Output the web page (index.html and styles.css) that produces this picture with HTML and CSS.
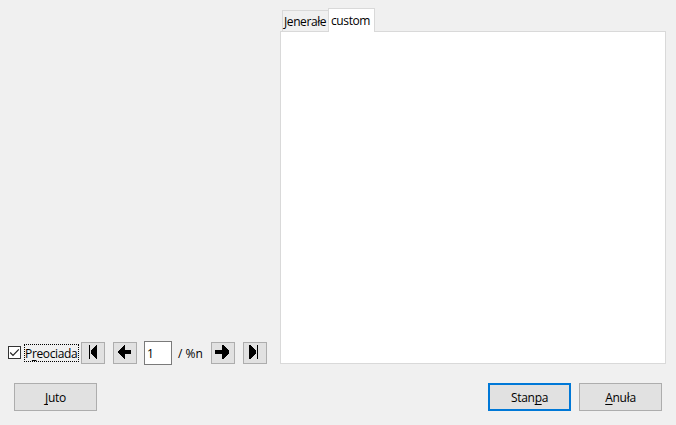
FILE: index.html
```html
<!DOCTYPE html>
<html lang="vec">
<head>
<meta charset="utf-8">
<title>Stanpa</title>
<link rel="stylesheet" href="styles.css">
</head>
<body>
<div class="dialog">
  <main class="content">
    <section class="preview">
      <div class="toolbar">
        <span class="check"><svg width="11" height="11" viewBox="0 0 11 11"><path d="M1.2 5.5 4 8.3 9.8 2.3"/></svg></span>
        <label class="check-label"><span class="t-preview">P<u>r</u>eociada</span></label>
        <button class="nav first"><svg width="22" height="20"><path d="M7 2h1v14H7zM15 2v14h-1l-5-6V8l5-6z"/></svg></button>
        <button class="nav prev"><svg width="22" height="20"><path d="M4 8l6-6h1v5h6v4h-6v5h-1l-6-6z"/></svg></button>
        <div class="page"><span>1</span></div>
        <span class="total">/ %n</span>
        <button class="nav next"><svg width="22" height="20"><path d="M17 8l-6-6h-1v5H3v4h7v5h1l6-6z"/></svg></button>
        <button class="nav last"><svg width="22" height="20"><path d="M13 2h1v14h-1zM5 2v14h1l6-6V8L6 2z"/></svg></button>
      </div>
    </section>
    <section class="options">
      <div class="tabs">
        <div class="tab"><span class="t-general">Jenerałe</span></div>
        <div class="tab active"><span class="t-custom">custom</span></div>
      </div>
      <div class="panel"></div>
    </section>
  </main>
  <footer class="actions">
    <button class="btn help"><span class="t-help"><u>J</u>uto</span></button>
    <button class="btn default"><span class="t-print">Stan<u>p</u>a</span></button>
    <button class="btn"><span class="t-cancel"><u>A</u>nuła</span></button>
  </footer>
</div>
</body>
</html>
```
FILE: styles.css
```css
* { box-sizing: border-box; }
body {
  margin: 0;
  background: #f0f0f0;
  color: #000;
  font: 12px/16px "Open Sans", "Noto Sans", sans-serif;
  overflow: hidden;
}
.dialog { width: 676px; height: 425px; display: flex; flex-direction: column; padding: 8px 10px 14px 8px; }
.content { display: flex; height: 356px; }
.preview { width: 272px; display: flex; align-items: flex-end; }
.toolbar { display: flex; align-items: center; height: 24px; margin-bottom: -1px; }
.check { width: 13px; height: 13px; border: 1px solid #333; background: #fff; display: flex; margin: 0 3px 1px 0; }
.check svg { fill: none; stroke: #222; stroke-width: 1.2; }
.check-label { width: 55px; height: 18px; border: 1px dotted #000; display: flex; align-items: center; white-space: nowrap; margin-right: 2px; }
u { text-decoration: underline; text-decoration-thickness: 1px; text-underline-offset: 2px; text-decoration-skip-ink: none; }
button { font: inherit; color: inherit; background: #e1e1e1; border: 1px solid #adadad; padding: 0; }
.nav { width: 24px; height: 22px; display: flex; flex: none; }
.nav svg { fill: #000; shape-rendering: crispEdges; }
.prev { margin: 0 7px 0 8px; }
.next { margin-right: 8px; }
.page { width: 28px; height: 24px; border: 1px solid #7a7a7a; background: #fff; padding: 4px 0 0 2px; }
.total { width: 39px; padding: 2px 0 0 6px; white-space: nowrap; }
.options { width: 386px; display: flex; flex-direction: column; }
.tabs { display: flex; align-items: flex-end; height: 24px; padding-left: 2px; margin-bottom: -1px; z-index: 1; }
.tab { width: 46px; height: 22px; border: 1px solid #d9d9d9; border-right: 0; padding: 3px 0 0 1px; white-space: nowrap; }
.tab.active { width: 47px; height: 24px; background: #fff; border-right: 1px solid #d9d9d9; border-bottom: 0; padding: 4px 0 0 2px; }
.panel { flex: 1; background: #fff; border: 1px solid #d9d9d9; }
.actions { display: flex; gap: 8px; margin-top: 19px; padding: 0 4px 0 6px; }
.btn { width: 83px; height: 28px; display: flex; align-items: center; justify-content: center; padding-top: 2px; }
.help { margin-right: auto; }
.default { border: 2px solid #0078d7; }
.t-preview { letter-spacing: -0.35px; padding-top: 2px; }
.t-general { letter-spacing: -0.4px; }
.t-custom { letter-spacing: -0.4px; }
.t-help, .t-print, .t-cancel { letter-spacing: -0.3px; }
```
